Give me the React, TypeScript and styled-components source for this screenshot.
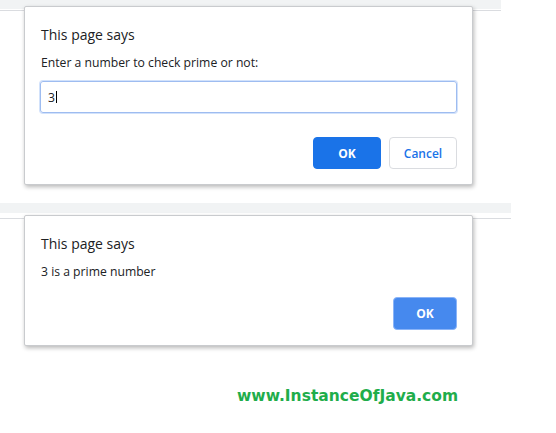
import React from "react";
import styled, { createGlobalStyle } from "styled-components";

const Global = createGlobalStyle`
  html, body { margin: 0; padding: 0; background: #ffffff; }
  body { font-family: "Open Sans", "Noto Sans", Arial, sans-serif; color: #202124; }
  * { box-sizing: border-box; }
`;

const Page = styled.div`
  display: flex;
  flex-direction: column;
  align-items: flex-start;
  width: 556px;
  height: 433px;
  overflow: hidden;
`;

const Section = styled.section<{ $band: number; $line: number; $width: number; $top: number }>`
  width: ${(p) => p.$width}px;
  margin-top: ${(p) => p.$top}px;
  display: flex;
  flex-direction: column;
  background:
    linear-gradient(#f1f3f4, #f1f3f4) 0 0 / 100% ${(p) => p.$band}px no-repeat,
    linear-gradient(#dadce0, #dadce0) 0 ${(p) => p.$line}px / 100% 1px no-repeat;
`;

const Dialog = styled.div<{ $top: number }>`
  margin-top: ${(p) => p.$top}px;
  margin-left: 24px;
  width: 449px;
  background: #ffffff;
  border: 1px solid #c9cbce;
  border-radius: 2px;
  box-shadow: 1px 2px 4px rgba(0, 0, 0, 0.28);
  padding: 18px 15px 15px 15px;
  display: flex;
  flex-direction: column;
`;

const Title = styled.div`
  font-size: 14px;
  line-height: 20px;
  padding-left: 1px;
  color: #202124;
`;

const Message = styled.div`
  margin-top: 9px;
  font-size: 12.2px;
  line-height: 18px;
  padding-left: 1px;
  color: #202124;
`;

const Field = styled.div`
  margin-top: 9px;
  height: 32px;
  border: 1px solid #9ebcf0;
  box-shadow: 0 0 0 1px #d2e2fb;
  border-radius: 3px;
  padding-left: 7px;
  display: flex;
  align-items: center;
  font-size: 12.2px;
  color: #202124;
  &::after {
    content: "";
    display: block;
    width: 1px;
    height: 12px;
    margin-left: 1px;
    background: #000000;
  }
`;

const Actions = styled.div<{ $top: number }>`
  margin-top: ${(p) => p.$top}px;
  display: flex;
  justify-content: flex-end;
  gap: 8px;
`;

const Button = styled.button<{ $variant: "primary" | "soft" | "secondary"; $width: number; $height: number }>`
  width: ${(p) => p.$width}px;
  height: ${(p) => p.$height}px;
  border-radius: 4px;
  font-family: "Open Sans", "Noto Sans", Arial, sans-serif;
  font-size: 12px;
  font-weight: ${(p) => (p.$variant === "secondary" ? 600 : 700)};
  padding: 0;
  cursor: pointer;
  background: ${(p) =>
    p.$variant === "primary" ? "#1a73e8" : p.$variant === "soft" ? "#4689ee" : "#ffffff"};
  color: ${(p) => (p.$variant === "secondary" ? "#1a73e8" : "#ffffff")};
  border: 1px solid
    ${(p) => (p.$variant === "primary" ? "#1a73e8" : p.$variant === "soft" ? "#8ab4f8" : "#dadce0")};
`;

const Watermark = styled.div`
  margin-top: 40px;
  margin-left: 237px;
  font-family: "DejaVu Sans", Verdana, sans-serif;
  font-weight: 700;
  font-size: 15.5px;
  line-height: 20px;
  color: #1fad4b;
`;

export default function App() {
  return (
    <>
      <Global />
      <Page>
        <Section $band={9} $line={10} $width={501} $top={0}>
          <Dialog $top={6}>
            <Title>This page says</Title>
            <Message>Enter a number to check prime or not:</Message>
            <Field>3</Field>
            <Actions $top={24}>
              <Button $variant="primary" $width={68} $height={32}>OK</Button>
              <Button $variant="secondary" $width={68} $height={32}>Cancel</Button>
            </Actions>
          </Dialog>
        </Section>
        <Section $band={10} $line={15} $width={511} $top={18}>
          <Dialog $top={12}>
            <Title>This page says</Title>
            <Message>3 is a prime number</Message>
            <Actions $top={16}>
              <Button $variant="soft" $width={64} $height={33}>OK</Button>
            </Actions>
          </Dialog>
        </Section>
        <Watermark>www.InstanceOfJava.com</Watermark>
      </Page>
    </>
  );
}
